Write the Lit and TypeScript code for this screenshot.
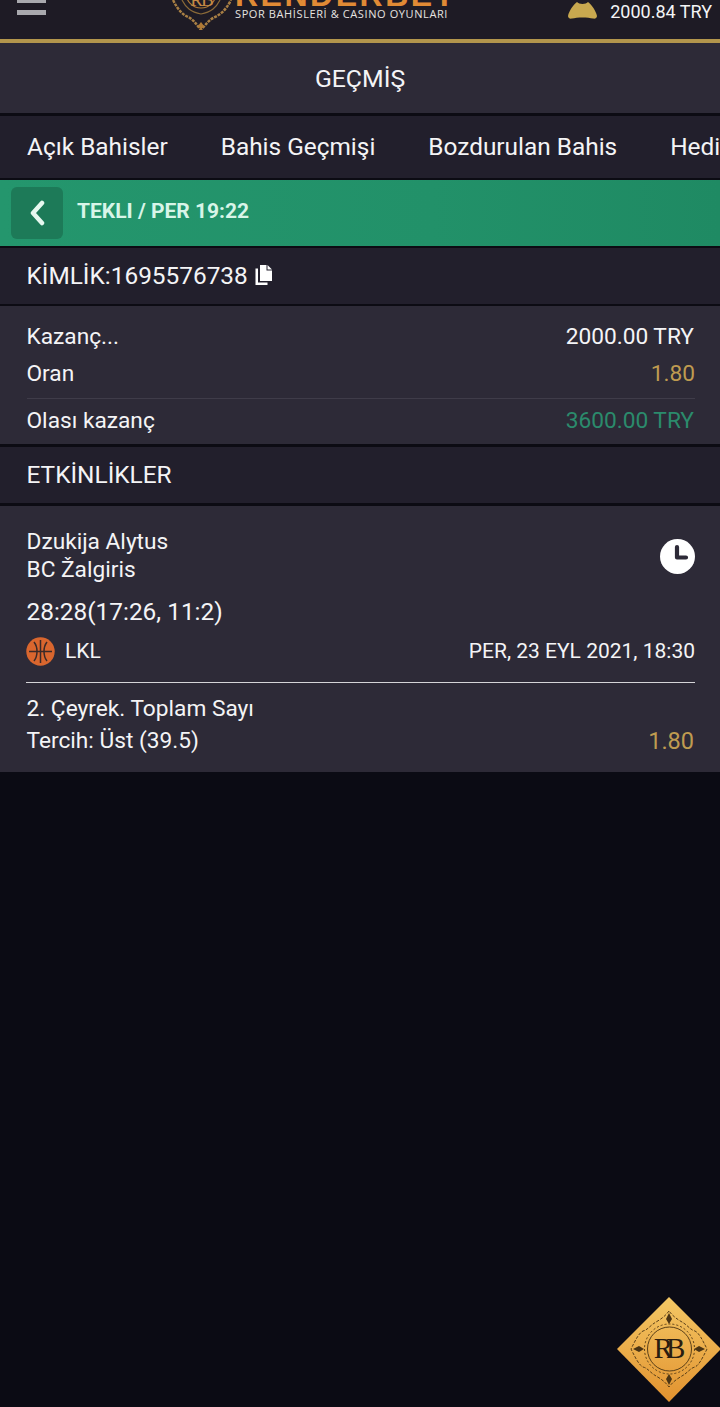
import { LitElement, html, css, svg } from "lit";
import { customElement } from "lit/decorators.js";

const ornament = svg`<g fill="none" stroke="#5a3f18" stroke-width="1">
  <path d="M52 14 C46 22 40 24 36 27 C31 31 30 33 26 34 C22 36 19 42 14 52 C19 62 22 68 26 70 C30 71 31 73 36 77 C40 80 46 82 52 90 C58 82 64 80 68 77 C73 73 74 71 78 70 C82 68 85 62 90 52 C85 42 82 36 78 34 C74 33 73 31 68 27 C64 24 58 22 52 14 Z" stroke-dasharray="3 1.5"/>
  <circle cx="52.5" cy="52" r="22"/>
  <circle cx="52.5" cy="52" r="25" stroke-dasharray="2 2"/>
</g>
<g fill="#4a3414"><path d="M52 16l3 6-3 5-3-5z"/><path d="M52 88l3-6-3-5-3 5z"/><path d="M16 52l6-3 5 3-5 3z"/><path d="M88 52l-6-3-5 3 5 3z"/></g>`;

@customElement("app-root")
export class AppRoot extends LitElement {
  static styles = css`
    :host { display: block; position: relative; width: 720px; height: 1407px; overflow: hidden; background: #0b0b14; font-family: Roboto, "Liberation Sans", sans-serif; color: #f4f4f6; font-size: 22.7px; }
    .hdr { height: 39px; background: #1e1b25; border-bottom: 4px solid #b2954c; display: flex; align-items: flex-start; overflow: hidden; }
    .burger { margin: -2px 0 0 17px; width: 29px; display: flex; flex-direction: column; gap: 7px; flex: none; }
    .burger i { display: block; height: 5px; background: #a9a9ae; }
    .logo { margin: -36px 0 0 126px; display: flex; gap: 3px; flex: none; }
    .crest { width: 60px; height: 66px; flex: none; }
    .brand { display: flex; flex-direction: column; align-items: flex-start; padding-top: 20px; }
    .brand b { font-family: "Liberation Sans", sans-serif; font-size: 32px; line-height: 22px; letter-spacing: 2.5px; color: #e08a35; font-weight: 700; white-space: nowrap; }
    .brand span { font-family: "Open Sans", sans-serif; font-size: 11px; line-height: 14px; letter-spacing: .6px; color: #e6e3e0; white-space: nowrap; margin-top: .5px; }
    .bal { margin: 1px 8px 0 auto; width: 144px; height: 21px; display: flex; align-items: center; justify-content: space-between; font-size: 18px; flex: none; }
    .bal svg { width: 29px; height: 18px; margin-top: -3px; flex: none; }
    .title { height: 70px; background: #2d2a37; display: flex; align-items: center; justify-content: center; font-size: 24.8px; }
    .sep { border-top: 3px solid #0c0b13; }
    .sep2 { border-top: 2px solid #0c0b13; }
    .tabs { height: 60px; padding-bottom: 2px; background: #221f2c; display: flex; align-items: center; gap: 53px; padding-left: 27px; white-space: nowrap; overflow: hidden; font-size: 24.4px; }
    .green { height: 66px; background: linear-gradient(90deg, #24966d, #229169 60%, #1f8a63); display: flex; align-items: center; padding-left: 11px; gap: 14px; }
    .back { width: 52px; height: 52px; border-radius: 6px; background: #1d7a58; display: flex; align-items: center; justify-content: center; }
    .back svg { width: 18px; height: 26px; }
    .green b { font-size: 21px; font-weight: 700; color: #d8f5e8; padding-bottom: 4px; }
    .bar { height: 54px; padding-bottom: 2px; background: #221f2c; display: flex; align-items: center; padding-left: 26.5px; gap: 7px; font-size: 24.4px; }
    .id svg { width: 17px; height: 20px; flex: none; }
    .sum { background: #2d2a37; padding: 12px 26px 0 26.5px; height: 126px; }
    .row { display: flex; justify-content: space-between; align-items: center; }
    .r1 { height: 36px; }
    .r2 { height: 38px; padding-bottom: 6px; border-bottom: 1px solid #3f3c49; margin-right: -1px; }
    .r3 { height: 42px; }
    .gold { color: #bf9b50; }
    .teal { color: #2b8b6c; }
    .ev { height: 244px; background: #2d2a37; padding: 22px 25px 0 26.5px; }
    .teams { display: flex; justify-content: space-between; align-items: center; line-height: 28px; }
    .clock { width: 35px; height: 35px; }
    .score { margin-top: 13px; line-height: 30px; font-size: 24.4px; }
    .league { height: 46px; margin-top: 1px; display: flex; align-items: center; justify-content: space-between; font-size: 21px; }
    .league div { display: flex; align-items: center; gap: 10px; }
    .league svg { width: 29px; height: 29px; flex: none; margin-left: -.5px; }
    .rule { height: 1px; background: #d5d4d8; margin-top: 8px; margin-left: -.5px; }
    .market { margin-top: 10px; line-height: 32px; font-size: 22.7px; }
    .pick { display: flex; justify-content: space-between; line-height: 32px; }
    .pick span:last-child { font-size: 23.5px; margin-right: 1px; }
    .fab { position: absolute; left: 617px; top: 1297px; width: 104px; height: 105px; }
  `;

  render() {
    return html`
      <div class="hdr">
        <div class="burger"><i></i><i></i></div>
        <div class="logo">
          <svg class="crest" viewBox="0 0 60 66">
            <path d="M1 36 C6 46 10 50 16 53 C21 55 24 60 29 66 C34 60 38 55 43 53 C49 50 54 46 59 36" fill="none" stroke="#a87f44" stroke-width="2.5" stroke-dasharray="3 1"/>
            <path d="M10 36 C14 44 19 48 29 50 C39 48 44 44 48 36" fill="none" stroke="#8a6a38" stroke-width="1.2"/>
            <path d="M29 58 l3 4 -3 4 -3 -4z" fill="#b07a35"/>
            <circle cx="29" cy="29" r="15" fill="none" stroke="#b07a35" stroke-width="1.2"/>
            <text x="29" y="42" text-anchor="middle" font-family="Liberation Serif" font-size="19" letter-spacing="-2" fill="#c48a45">RB</text>
          </svg>
          <div class="brand"><b>RENDERBET</b><span>SPOR BAHİSLERİ &amp; CASINO OYUNLARI</span></div>
        </div>
        <div class="bal">
          <svg viewBox="0 0 29 18"><path d="M9 1 C11 3.5 18 3.5 20 1 C24 4 28 10 29 15 C29 17 27 18 25 17.5 C20 16 9 16 4 17.5 C2 18 0 17 0 15 C1 10 5 4 9 1 Z" fill="#c8a84f"/></svg>
          <span>2000.84 TRY</span>
        </div>
      </div>
      <div class="title">GEÇMİŞ</div>
      <div class="sep tabs">
        <span>Açık Bahisler</span><span>Bahis Geçmişi</span><span>Bozdurulan Bahis</span><span>Hediye</span>
      </div>
      <div class="sep2 green">
        <div class="back"><svg viewBox="0 0 18 26"><path d="M14 3 L5 13 L14 23" fill="none" stroke="#e6f8ef" stroke-width="4.5" stroke-linecap="round" stroke-linejoin="round"/></svg></div>
        <b>TEKLI / PER 19:22</b>
      </div>
      <div class="sep2 bar id">
        <span>KİMLİK:1695576738</span>
        <svg viewBox="0 0 17 20"><path d="M5 0 H11.5 V5.5 H17 V16 H5 Z" fill="#fff"/><path d="M12.5 0 L17 4.5 H12.5 Z" fill="#fff"/><path d="M3 3.5 V17.5 H12.5 V20 H0.5 V3.5 Z" fill="#fff"/></svg>
      </div>
      <div class="sep2 sum">
        <div class="row r1"><span>Kazanç...</span><span>2000.00 TRY</span></div>
        <div class="row r2"><span>Oran</span><span class="gold">1.80</span></div>
        <div class="row r3"><span>Olası kazanç</span><span class="teal">3600.00 TRY</span></div>
      </div>
      <div class="sep bar">ETKİNLİKLER</div>
      <div class="sep ev">
        <div class="teams">
          <div>Dzukija Alytus<br />BC Žalgiris</div>
          <svg class="clock" viewBox="0 0 35 35"><circle cx="17.5" cy="17.5" r="17.5" fill="#fff"/><path d="M17 8 V18.5 H26" fill="none" stroke="#2d2a37" stroke-width="4.2" stroke-linecap="round" stroke-linejoin="round"/></svg>
        </div>
        <div class="score">28:28(17:26, 11:2)</div>
        <div class="league">
          <div>
            <svg viewBox="0 0 29 29"><circle cx="14.5" cy="14.5" r="14.2" fill="#d9662e"/><g fill="none" stroke="#3a2a28" stroke-width="1.5"><path d="M3 14.5 H26"/><path d="M14.5 3 V26"/><path d="M8 5 C12 10 12 19 8 24"/><path d="M21 5 C17 10 17 19 21 24"/></g></svg>
            <span>LKL</span>
          </div>
          <span>PER, 23 EYL 2021, 18:30</span>
        </div>
        <div class="rule"></div>
        <div class="market">2. Çeyrek. Toplam Sayı</div>
        <div class="pick"><span>Tercih: Üst (39.5)</span><span class="gold">1.80</span></div>
      </div>
      <svg class="fab" viewBox="0 0 104 105">
        <defs><linearGradient id="g" x1="0.5" y1="0" x2="0.5" y2="1"><stop offset="0" stop-color="#f4c865"/><stop offset="1" stop-color="#e2922f"/></linearGradient></defs>
        <path d="M52 0 L104 52 L52 105 L0 52 Z" fill="url(#g)"/>
        ${ornament}
        <text x="49" y="61" text-anchor="middle" font-family="Liberation Serif" font-size="29" letter-spacing="-7" fill="#2a1d10">RB</text>
      </svg>
    `;
  }
}
